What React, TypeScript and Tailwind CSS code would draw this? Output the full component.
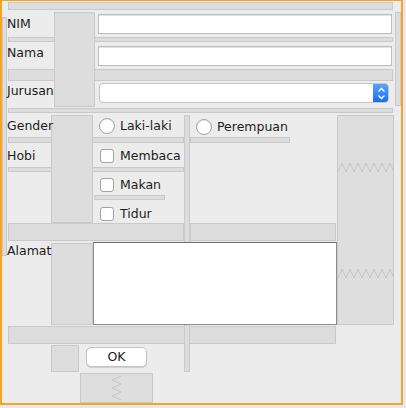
import React from "react";

// GroupLayout design view: every gap and widget sits in a fixed grid track
function Gap({ className }: { className: string }) {
  return <div className={`bg-[#dddddd] border border-[#c9c9c9] ${className}`} />;
}

function Radio() {
  return (
    <span className="block w-[16px] h-[16px] shrink-0 rounded-full bg-white border border-[#a3a3a3] shadow-[inset_0_1px_1px_rgba(0,0,0,0.08)]" />
  );
}

function Check() {
  return (
    <span className="block w-[14px] h-[14px] shrink-0 rounded-[3px] bg-white border border-[#a3a3a3]" />
  );
}

function Zigzag() {
  return (
    <svg width="56" height="11" viewBox="0 0 56 11">
      <polyline
        points="0,10 4,1 8,10 12,1 16,10 20,1 24,10 28,1 32,10 36,1 40,10 44,1 48,10 52,1 56,10"
        fill="none"
        stroke="#c6c6c6"
        strokeWidth="1"
      />
    </svg>
  );
}

function App() {
  return (
    <div className="w-[406px] h-[408px] bg-[#e6e6f9] overflow-hidden font-['DejaVu_Sans',sans-serif] text-[12.5px] leading-[14px] text-[#1c1c1c]">
      <div className="grid w-[403px] h-[405px] bg-[#ececec] border-x-2 border-b-2 border-t border-[#f7a521] grid-cols-[5px_1px_43px_3px_25px_1px_6px_7px_2px_3px_49px_6px_12px_19px_6px_100px_46px_1px_52px_3px_1px_1px_1px_6px] grid-rows-[1px_8px_2px_2px_3px_17px_3px_5px_4px_20px_3px_12px_2px_20px_3px_1px_1px_5px_2px_22px_6px_24px_5px_23px_5px_23px_18px_1px_1px_13px_69px_1px_18px_1px_2px_20px_5px_1px_30px]">
        {/* horizontal gaps */}
        <Gap className="col-start-3 col-end-22 row-start-2 row-end-3" />
        <Gap className="col-start-3 col-end-22 row-start-8 row-end-9" />
        <Gap className="col-start-3 col-end-22 row-start-12 row-end-13" />
        <Gap className="col-start-3 col-end-22 row-start-18 row-end-19" />
        <Gap className="col-start-3 col-end-15 row-start-21 row-end-22" />
        <Gap className="col-start-16 col-end-17 row-start-21 row-end-22" />
        <Gap className="col-start-3 col-end-15 row-start-23 row-end-24" />
        <Gap className="col-start-9 col-end-14 row-start-25 row-end-26 ml-px" />
        <Gap className="col-start-3 col-end-15 row-start-27 row-end-28" />
        <Gap className="col-start-16 col-end-18 row-start-27 row-end-28" />
        <Gap className="col-start-3 col-end-18 row-start-33 row-end-34" />

        {/* vertical gaps */}
        <Gap className="col-start-1 col-end-2 row-start-6 row-end-31" />
        <Gap className="col-start-24 col-end-25 row-start-4 row-end-16" />
        <Gap className="col-start-5 col-end-10 row-start-4 row-end-17" />
        <Gap className="col-start-4 col-end-9 row-start-20 row-end-27" />
        <Gap className="col-start-15 col-end-16 row-start-20 row-end-38" />
        <Gap className="col-start-4 col-end-9 row-start-30 row-end-32" />
        <Gap className="col-start-4 col-end-6 row-start-35 row-end-38" />

        <div className="col-start-19 col-end-23 row-start-20 row-end-32 flex flex-col pt-[46px] gap-[95px] bg-[#dedede] border border-[#c9c9c9]">
          <Zigzag />
          <Zigzag />
        </div>

        <div className="col-start-7 col-end-13 row-start-39 row-end-40 flex items-center justify-center bg-[#dedede] border border-[#c9c9c9]">
          <svg width="11" height="25" viewBox="0 0 11 25">
            <polyline
              points="10,0 1,4 10,8 1,12 10,16 1,20 10,24"
              fill="none"
              stroke="#c6c6c6"
              strokeWidth="1"
            />
          </svg>
        </div>

        {/* labels */}
        <span className="col-start-2 col-end-5 row-start-6 row-end-7 whitespace-nowrap">NIM</span>
        <span className="col-start-2 col-end-5 row-start-10 row-end-11 whitespace-nowrap">Nama</span>
        <span className="col-start-2 col-end-5 row-start-14 row-end-15 pt-px whitespace-nowrap">Jurusan</span>
        <span className="col-start-2 col-end-4 row-start-20 row-end-21 flex items-center whitespace-nowrap">Gender</span>
        <span className="col-start-2 col-end-4 row-start-22 row-end-23 flex items-center pt-[2px] whitespace-nowrap">Hobi</span>
        <span className="col-start-2 col-end-4 row-start-30 row-end-31 pt-px whitespace-nowrap">Alamat</span>

        {/* text fields */}
        <div className="col-start-11 col-end-21 row-start-5 row-end-7 bg-white border border-[#bdbdbd] shadow-[inset_0_1px_0_#e2e2e2]" />
        <div className="col-start-11 col-end-21 row-start-10 row-end-11 bg-white border border-[#bdbdbd] shadow-[inset_0_1px_0_#e2e2e2]" />

        {/* combo box */}
        <div className="col-start-11 col-end-20 row-start-14 row-end-15 ml-px flex rounded-[4px] bg-white border border-[#c4c4c4] overflow-hidden">
          <div className="flex-1" />
          <div className="w-[16px] -my-px -mr-px flex items-center justify-center rounded-r-[4px] bg-gradient-to-b from-[#5da6fb] to-[#1568f2]">
            <svg width="9" height="13" viewBox="0 0 9 13">
              <polyline points="1.5,4.5 4.5,1.5 7.5,4.5" fill="none" stroke="white" strokeWidth="1.4" />
              <polyline points="1.5,8.5 4.5,11.5 7.5,8.5" fill="none" stroke="white" strokeWidth="1.4" />
            </svg>
          </div>
        </div>

        {/* gender */}
        <div className="col-start-11 col-end-15 row-start-20 row-end-21 flex items-center gap-[5px] pl-px whitespace-nowrap">
          <Radio />
          <span>Laki-laki</span>
        </div>
        <div className="col-start-16 col-end-18 row-start-20 row-end-21 flex items-center gap-[5px] pl-[6px] pt-[2px] whitespace-nowrap">
          <Radio />
          <span>Perempuan</span>
        </div>

        {/* hobi */}
        <div className="col-start-11 col-end-15 row-start-22 row-end-23 flex items-center gap-[6px] pl-[2px] pt-[2px] whitespace-nowrap">
          <Check />
          <span>Membaca</span>
        </div>
        <div className="col-start-11 col-end-14 row-start-24 row-end-25 flex items-center gap-[6px] pl-[2px] pt-[3px] whitespace-nowrap">
          <Check />
          <span>Makan</span>
        </div>
        <div className="col-start-11 col-end-14 row-start-26 row-end-27 flex items-center gap-[6px] pl-[2px] pt-[4px] whitespace-nowrap">
          <Check />
          <span>Tidur</span>
        </div>

        {/* alamat */}
        <div className="col-start-9 col-end-19 row-start-29 row-end-32 bg-white border border-[#8c8c8c] border-t-[#6f6f6f]" />

        {/* OK */}
        <button className="col-start-8 col-end-12 row-start-36 row-end-37 flex items-center justify-center rounded-[5px] bg-white border border-[#c2c2c2] shadow-[0_1px_0_#d0d0d0] text-[12.5px] leading-[14px] text-[#1c1c1c]">
          OK
        </button>
      </div>
    </div>
  );
}

export default App;
